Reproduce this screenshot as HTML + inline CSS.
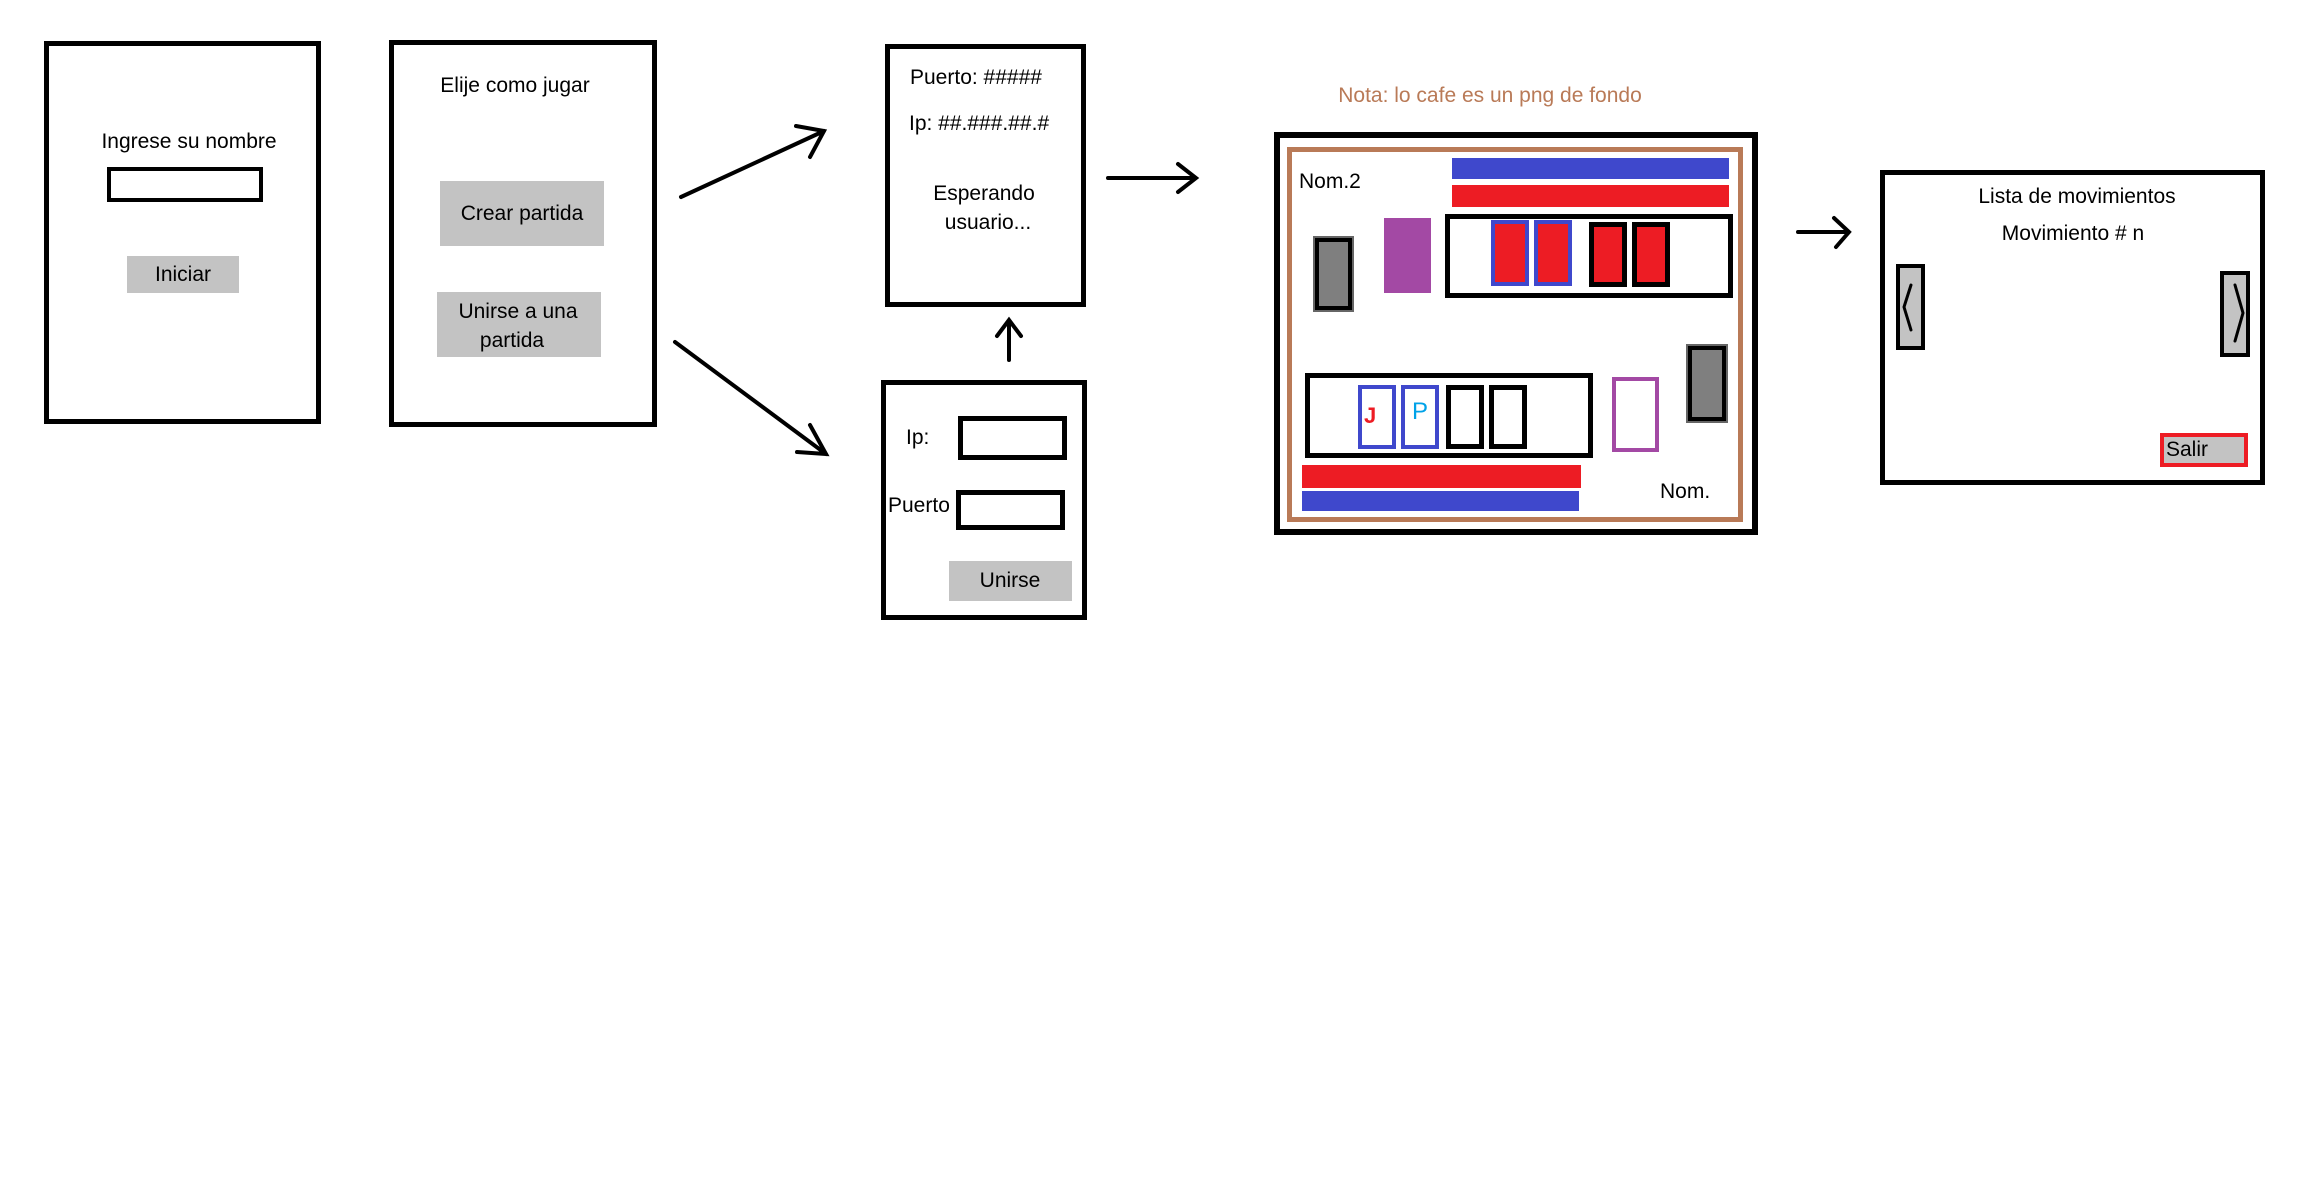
<!DOCTYPE html>
<html><head><meta charset="utf-8"><style>
body{margin:0;width:2320px;height:1192px;background:#fff;position:relative;overflow:hidden;font-family:"Liberation Sans",sans-serif;font-size:21px;color:#000}
.a{position:absolute;box-sizing:border-box}
.b{border:5px solid #000}
.g{background:#c3c3c3}
.t{position:absolute;white-space:nowrap;line-height:1}
.c{transform:translateX(-50%)}
</style></head><body>
<div class="a b" style="left:44px;top:41px;width:277px;height:383px"></div>
<div class="t c" style="left:189px;top:131px">Ingrese su nombre</div>
<div class="a" style="left:107px;top:167px;width:156px;height:35px;border:4px solid #000"></div>
<div class="a g" style="left:127px;top:256px;width:112px;height:37px"></div>
<div class="t c" style="left:183px;top:264px">Iniciar</div>
<div class="a b" style="left:389px;top:40px;width:268px;height:387px"></div>
<div class="t c" style="left:515px;top:75px">Elije como jugar</div>
<div class="a g" style="left:440px;top:181px;width:164px;height:65px"></div>
<div class="t c" style="left:522px;top:203px">Crear partida</div>
<div class="a g" style="left:437px;top:292px;width:164px;height:65px"></div>
<div class="t c" style="left:518px;top:301px">Unirse a una</div>
<div class="t c" style="left:512px;top:330px">partida</div>
<div class="a b" style="left:885px;top:44px;width:201px;height:263px"></div>
<div class="t" style="left:910px;top:67px">Puerto: #####</div>
<div class="t" style="left:909px;top:113px">Ip: ##.###.##.#</div>
<div class="t c" style="left:984px;top:183px">Esperando</div>
<div class="t c" style="left:988px;top:212px">usuario...</div>
<div class="a b" style="left:881px;top:380px;width:206px;height:240px"></div>
<div class="t" style="left:906px;top:427px">Ip:</div>
<div class="a" style="left:958px;top:416px;width:109px;height:44px;border:5px solid #000"></div>
<div class="t" style="left:888px;top:495px">Puerto</div>
<div class="a" style="left:956px;top:490px;width:109px;height:40px;border:5px solid #000"></div>
<div class="a g" style="left:949px;top:561px;width:123px;height:40px"></div>
<div class="t c" style="left:1010px;top:570px">Unirse</div>
<div class="t c" style="left:1490px;top:85px;color:#b97a57">Nota: lo cafe es un png de fondo</div>
<div class="a" style="left:1274px;top:132px;width:484px;height:403px;border:6px solid #000"></div>
<div class="a" style="left:1287px;top:147px;width:456px;height:375px;border:5px solid #b97a57"></div>
<div class="t" style="left:1299px;top:171px">Nom.2</div>
<div class="a" style="left:1452px;top:158px;width:277px;height:21px;background:#3f48cc"></div>
<div class="a" style="left:1452px;top:185px;width:277px;height:22px;background:#ed1c24"></div>
<div class="a" style="left:1315px;top:238px;width:37px;height:72px;background:#7f7f7f;border:4px solid #000;outline:2px solid #666"></div>
<div class="a" style="left:1384px;top:218px;width:47px;height:75px;background:#a349a4"></div>
<div class="a" style="left:1445px;top:214px;width:288px;height:84px;border:5px solid #000"></div>
<div class="a" style="left:1491px;top:220px;width:38px;height:66px;background:#ed1c24;border:4px solid #3f48cc"></div>
<div class="a" style="left:1534px;top:220px;width:38px;height:66px;background:#ed1c24;border:4px solid #3f48cc"></div>
<div class="a" style="left:1589px;top:222px;width:38px;height:65px;background:#ed1c24;border:5px solid #000"></div>
<div class="a" style="left:1632px;top:222px;width:38px;height:65px;background:#ed1c24;border:5px solid #000"></div>
<div class="a" style="left:1305px;top:373px;width:288px;height:85px;border:5px solid #000"></div>
<div class="a" style="left:1358px;top:385px;width:38px;height:64px;border:4px solid #3f48cc"></div>
<div class="t" style="left:1364px;top:405px;color:#ed1c24;font-weight:bold;font-size:22px">J</div>
<div class="a" style="left:1401px;top:385px;width:38px;height:64px;border:4px solid #3f48cc"></div>
<div class="t" style="left:1412px;top:400px;color:#00a2e8;font-size:24px">P</div>
<div class="a" style="left:1446px;top:385px;width:38px;height:64px;border:5px solid #000"></div>
<div class="a" style="left:1489px;top:385px;width:38px;height:64px;border:5px solid #000"></div>
<div class="a" style="left:1612px;top:377px;width:47px;height:75px;border:4px solid #a349a4"></div>
<div class="a" style="left:1688px;top:346px;width:38px;height:75px;background:#7f7f7f;border:4px solid #000;outline:2px solid #666"></div>
<div class="a" style="left:1302px;top:465px;width:279px;height:23px;background:#ed1c24"></div>
<div class="a" style="left:1302px;top:491px;width:277px;height:20px;background:#3f48cc"></div>
<div class="t" style="left:1660px;top:481px">Nom.</div>
<div class="a" style="left:1880px;top:170px;width:385px;height:315px;border:5px solid #000"></div>
<div class="t c" style="left:2077px;top:186px">Lista de movimientos</div>
<div class="t c" style="left:2073px;top:223px">Movimiento # n</div>
<div class="a g" style="left:1896px;top:264px;width:29px;height:86px;border:4px solid #000"></div>
<div class="a g" style="left:2220px;top:271px;width:30px;height:86px;border:4px solid #000"></div>
<div class="a g" style="left:2160px;top:433px;width:88px;height:34px;border:4px solid #ed1c24"></div>
<div class="t" style="left:2166px;top:439px">Salir</div>
<svg class="a" style="left:0;top:0" width="2320" height="1192">
<g stroke="#000" stroke-width="4" fill="none" stroke-linecap="round">
<path d="M681 197 L824 131 M796 126 L824 131 L810 157"/>
<path d="M675 342 L826 454 M810 425 L826 454 L797 452"/>
<path d="M1009 360 L1009 322 M997 336 L1009 320 L1021 336"/>
<path d="M1108 178 L1195 178 M1178 164 L1196 178 L1178 192"/>
<path d="M1798 232 L1848 232 M1834 218 L1849 232 L1836 247"/>
<path d="M1911 285 L1904 307 L1911 330" stroke-width="3"/>
<path d="M2235 285 L2243 313 L2235 341" stroke-width="3"/>
</g></svg>
</body></html>
